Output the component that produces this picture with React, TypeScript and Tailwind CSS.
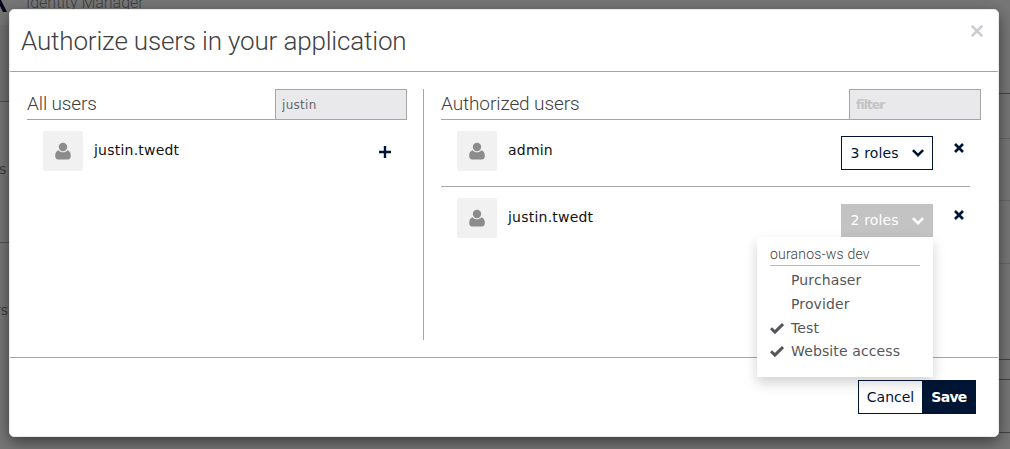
import type { ReactNode } from "react";

const title = "font-['Roboto'] font-light text-[#3f4044] whitespace-nowrap";

function Avatar() {
  return (
    <div className="flex h-10 w-10 shrink-0 items-center justify-center rounded-xs bg-[#f1f1f1]">
      <svg className="-mt-[1px] h-[18px] w-4" viewBox="0 0 16 18" fill="#8c8c8c">
        <circle cx="8" cy="5" r="4.200" />
        <path d="M3.600 8.200C1.300 8.700.2 10.800.2 14c0 2.200 1.100 3.400 3 3.400h9.600c1.900 0 3-1.200 3-3.400 0-3.200-1.100-5.300-3.400-5.800C11.300 9.500 9.800 10.300 8 10.300s-3.300-.8-4.400-2.100z" />
      </svg>
    </div>
  );
}

function Cross() {
  return (
    <svg className="h-[10px] w-[10px]" viewBox="0 0 10 10" stroke="#001533" strokeWidth="2.600" fill="none">
      <path d="M1 1l8 8M9 1L1 9" />
    </svg>
  );
}

function Chevron() {
  return (
    <svg className="h-2 w-3" viewBox="0 0 12 8" fill="none" stroke="currentColor" strokeWidth="2.500">
      <path d="M.9 1.100L6 6.200l5.100-5.100" />
    </svg>
  );
}

function Check() {
  return (
    <svg className="h-[11px] w-[14px]" viewBox="0 0 14 11" fill="none" stroke="#55565a" strokeWidth="3">
      <path d="M1 5.200l3.900 3.900L13 1.100" />
    </svg>
  );
}

function ColumnHead({ label, labelClass, children }: { label: string; labelClass: string; children: ReactNode }) {
  return (
    <div className="flex h-[31px] justify-between border-b border-[#a6a6a6]">
      <h2 className={`${title} text-[19px] leading-[30px] ${labelClass}`}>{label}</h2>
      {children}
    </div>
  );
}

const field =
  "h-[31px] w-[132px] border border-[#a6a6a6] bg-[#e9e9eb] px-[6px] font-['DejaVu_Sans'] text-[12px] tracking-[0.300px] text-[#66676b] outline-none placeholder:font-bold placeholder:tracking-[-0.800px] placeholder:text-[#c3c3c3] placeholder:opacity-100";

function Role({ name, checked }: { name: string; checked?: boolean }) {
  return (
    <li className="flex h-[23.700px] items-center text-[14px] tracking-[0.120px] text-[#55565a]">
      <span className="w-[21px]">{checked && <Check />}</span>
      <span className="whitespace-nowrap">{name}</span>
    </li>
  );
}

function UserName({ children }: { children: string }) {
  return <span className="pt-[10px] pl-[11px] leading-[18px] tracking-[0.220px]">{children}</span>;
}

function Backdrop() {
  return (
    <div className="flex h-full justify-between overflow-hidden bg-[#777777] text-[#3d3e40]">
      <div className="flex w-[200px] flex-col">
        <div className="flex h-[25px] shrink-0">
          <svg className="h-3 w-[26px]" viewBox="0 0 26 12" fill="#000b1d">
            <path d="M0 0h1l6 12H3L0 6z" />
          </svg>
          <span className="-mt-[9px] font-['Roboto'] text-[16px] font-light tracking-[-0.020px] whitespace-nowrap">Identity Manager</span>
        </div>
        <div className="h-[77px] shrink-0 border-b border-[#505050] bg-[#727272]" />
        <div className="h-[141px] w-[200px] shrink-0 border-b border-[#505050] pt-[57px] font-['DejaVu_Sans'] text-[14px] leading-5">
          <span className="-ml-[1px]">s</span>
        </div>
        <div className="flex w-2 justify-end pt-[57px] font-['DejaVu_Sans'] text-[14px] leading-5">rs</div>
      </div>
      <div className="flex w-5 flex-col">
        <div className="h-[94px] border-b border-[#444]" />
        <div className="h-[45px] border-b border-[#666]" />
        <div className="h-[62px] border-b border-[#666]" />
        <div className="h-[63px] border-b border-[#666]" />
        <div className="h-24 border-b border-[#444]" />
        <div className="h-5 border-b border-[#444]" />
        <div className="h-[53px] border-b border-[#444]" />
      </div>
    </div>
  );
}

export default function App() {
  return (
    <div className="relative h-[449px] w-[1010px] overflow-hidden font-['DejaVu_Sans',sans-serif] text-[14px] text-[#111]">
      <Backdrop />
      <div role="dialog" className="absolute top-[9px] left-[9px] flex h-[428px] w-[990px] flex-col rounded-[5px] border border-[#e9eaea] bg-white shadow-[0_5px_15px_rgba(0,0,0,0.500)]">
        <header className="flex h-[62px] shrink-0 justify-between border-b border-[#a6a6a6] pr-[15px] pl-[11px]">
          <h1 className={`${title} pt-[13px] text-[26px] leading-9 tracking-[-0.160px]`}>Authorize users in your application</h1>
          <button className="mt-[15px] h-3" aria-label="Close">
            <svg className="h-3 w-3" viewBox="0 0 12 12" stroke="#cacbd3" strokeWidth="2.600" fill="none">
              <path d="M.8.8l10.400 10.400M11.200.8L.8 11.200" />
            </svg>
          </button>
        </header>

        <main className="flex h-[286px] shrink-0 border-b border-[#a6a6a6] pt-[17px] pl-[17px]">
          <section className="w-[380px]">
            <ColumnHead label="All users" labelClass="tracking-[-0.130px]">
              <input className={field} defaultValue="justin" />
            </ColumnHead>
            <div className="flex pt-[11px] pl-4">
              <Avatar />
              <UserName>justin.twedt</UserName>
              <svg className="mt-[15px] mr-[16px] ml-auto h-3 w-3" viewBox="0 0 12 12" stroke="#001533" strokeWidth="2.400">
                <path d="M0 6h12M6 0v12" />
              </svg>
            </div>
          </section>

          <div className="ml-4 h-[251px] w-px bg-[#a6a6a6]" />

          <section className="ml-[17px] w-[540px]">
            <ColumnHead label="Authorized users" labelClass="tracking-[-0.100px]">
              <input className={field} placeholder="filter" />
            </ColumnHead>
            <div className="mr-[11px] flex h-[67px] border-b border-[#a6a6a6] pt-[11px] pl-4">
              <Avatar />
              <UserName>admin</UserName>
              <button className="mt-[5px] ml-auto flex h-[34px] w-[92px] items-center justify-between border border-[#001533] pr-[8px] pl-[8.500px] tracking-[0.150px] text-[#001533]">
                3 roles <Chevron />
              </button>
              <div className="w-[37px] pt-[12px] pl-[21px]"><Cross /></div>
            </div>
            <div className="mr-[11px] flex pt-[11px] pl-4">
              <Avatar />
              <UserName>justin.twedt</UserName>
              <div className="relative mt-[6px] ml-auto h-[33px] w-[92px]">
                <button className="flex h-full w-full items-center justify-between bg-[#c3c3c3] pr-[9px] pl-[9.500px] tracking-[0.150px] text-white">
                  2 roles <Chevron />
                </button>
                <div className="absolute top-full right-0 z-10 h-[140px] w-[176px] bg-white px-[13px] pt-[8px] shadow-[0_6px_12px_rgba(0,0,0,0.180)]">
                  <h3 className="h-[21px] border-b border-[#f1b925] font-['Roboto'] text-[14px] leading-[18px] font-light tracking-[0.200px] text-[#3f4044]">ouranos-ws dev</h3>
                  <ul className="pt-[3px]">
                    <Role name="Purchaser" />
                    <Role name="Provider" />
                    <Role name="Test" checked />
                    <Role name="Website access" checked />
                  </ul>
                </div>
              </div>
              <div className="w-[37px] pt-[12px] pl-[21px]"><Cross /></div>
            </div>
          </section>
        </main>

        <footer className="flex justify-end pt-[22px] pr-[22px]">
          <button className="h-[34px] w-[64px] border border-r-0 border-[#001533] text-[14px] text-[#001533]">Cancel</button>
          <button className="h-[34px] w-[54px] bg-[#001533] text-[14px] font-bold tracking-[-0.700px] text-white">Save</button>
        </footer>
      </div>
    </div>
  );
}
